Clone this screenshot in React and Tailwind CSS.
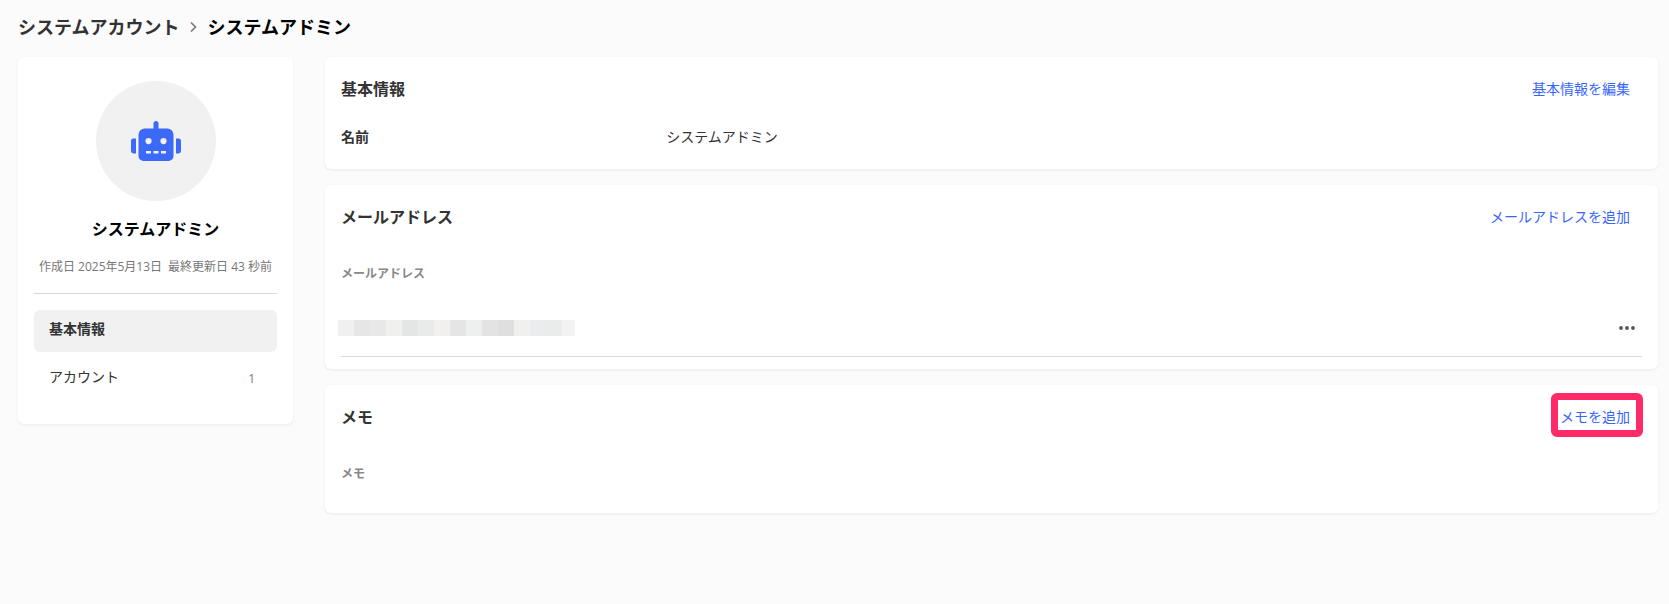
import { FaRobot } from "react-icons/fa";

const MENU = [
  { label: "基本情報", active: true },
  { label: "アカウント", count: 1 },
];

// masked e-mail address
const MASK = [
  "bg-[#f0f0f0]",
  "bg-[#e6e6e6]",
  "bg-[#e8e8e8]",
  "bg-[#f0f0ee]",
  "bg-[#e3e6e5]",
  "bg-[#e8ebe9]",
  "bg-[#f2f0ef]",
  "bg-[#e5e5e5]",
  "bg-[#edf0ef]",
  "bg-[#e3e3e3]",
  "bg-[#dfdfdf]",
  "bg-[#f0f0ee]",
  "bg-[#ebecef]",
  "bg-[#e9eceb]",
  "bg-[#f3f3f3]",
];

function Card({ title, action, highlight, className = "pb-4", children }) {
  return (
    <section className={`rounded-md bg-white px-4 pt-4 shadow-[0_1px_3px_rgba(0,0,0,0.07)] ${className}`}>
      <div className="flex h-8 items-center justify-between">
        <h2 className="text-base font-bold">{title}</h2>
        <div className="relative">
          <button type="button" className="block px-3 text-sm leading-8 text-[#3866fa] hover:underline">
            {action}
          </button>
          {highlight && (
            <span className="pointer-events-none absolute -top-2 -right-px -bottom-1 left-[3px] rounded-md border-7 border-[#ff2b68]" />
          )}
        </div>
      </div>
      <div className="mt-4">{children}</div>
    </section>
  );
}

function Sidebar() {
  return (
    <aside className="w-[275px] shrink-0 rounded-md bg-white px-4 pt-6 pb-6 shadow-[0_1px_3px_rgba(0,0,0,0.07)]">
      <div className="mx-auto flex size-[120px] items-center justify-center rounded-full bg-[#f1f1f1]">
        <FaRobot className="h-10 w-[50px] text-[#3c69f8]" />
      </div>
      <p className="mt-4 text-center text-base leading-6 font-bold text-black">システムアドミン</p>
      <div className="mt-3.5 flex justify-center gap-1.5 text-xs leading-6 whitespace-nowrap text-[#777]">
        <span>作成日 2025年5月13日</span>
        <span>最終更新日 43 秒前</span>
      </div>
      <hr className="mt-3.5 border-[#d9d9d9]" />
      <nav className="mt-4 flex flex-col gap-1.5">
        {MENU.map((item) => (
          <a
            key={item.label}
            href="#"
            className={`flex h-[42px] items-center justify-between rounded-md pr-[22px] pb-1 pl-[15px] text-sm ${
              item.active ? "bg-[#f1f1f1] font-bold" : ""
            }`}
          >
            {item.label}
            {item.count && <span className="pt-1 text-xs text-[#777]">{item.count}</span>}
          </a>
        ))}
      </nav>
    </aside>
  );
}

export default function App() {
  return (
    <div className="min-h-screen bg-[#fbfbfb] pr-[11px] pl-[18px] font-['Open_Sans','Noto_Sans_CJK_JP',sans-serif] text-[#333]">
      <nav className="flex h-[57px] items-center pb-1 text-lg leading-7 font-bold">
        <a href="#">システムアカウント</a>
        <svg className="h-3 w-7" viewBox="0 0 28 12" fill="none" stroke="#777" strokeWidth="1.6">
          <path d="M12 1.5 16.5 6 12 10.5" />
        </svg>
        <h1 className="text-black">システムアドミン</h1>
      </nav>

      <div className="flex items-start gap-8">
        <Sidebar />

        <main className="flex min-w-0 flex-1 flex-col gap-4">
          <Card title="基本情報" action="基本情報を編集">
            <dl className="grid h-8 grid-cols-4 items-center text-sm">
              <dt className="font-bold">名前</dt>
              <dd className="col-span-3">システムアドミン</dd>
            </dl>
          </Card>

          <Card title="メールアドレス" action="メールアドレスを追加" className="pb-3">
            <table className="w-full">
              <thead>
                <tr className="h-12">
                  <th colSpan={2} className="p-0 pt-0.5 text-left text-xs font-bold text-[#888]">
                    メールアドレス
                  </th>
                </tr>
              </thead>
              <tbody>
                <tr className="h-[59px] border-b border-[#d9d9d9]">
                  <td className="p-0 pt-1">
                    <div className="-ml-[3px] flex">
                      {MASK.map((color, i) => (
                        <span key={i} className={`h-4 w-4 last:w-[13px] ${color}`} />
                      ))}
                    </div>
                  </td>
                  <td className="w-[31px] p-0 pt-1">
                    <button type="button" aria-label="メニュー" className="flex h-8 w-full items-center justify-center">
                      <svg className="h-1 w-4" viewBox="0 0 16 4" fill="#555">
                        <circle cx="2" cy="2" r="1.9" />
                        <circle cx="8" cy="2" r="1.9" />
                        <circle cx="14" cy="2" r="1.9" />
                      </svg>
                    </button>
                  </td>
                </tr>
              </tbody>
            </table>
          </Card>

          <Card title="メモ" action="メモを追加" highlight>
            <h3 className="pt-0.5 text-xs leading-[46px] font-bold text-[#888]">メモ</h3>
          </Card>
        </main>
      </div>
    </div>
  );
}
